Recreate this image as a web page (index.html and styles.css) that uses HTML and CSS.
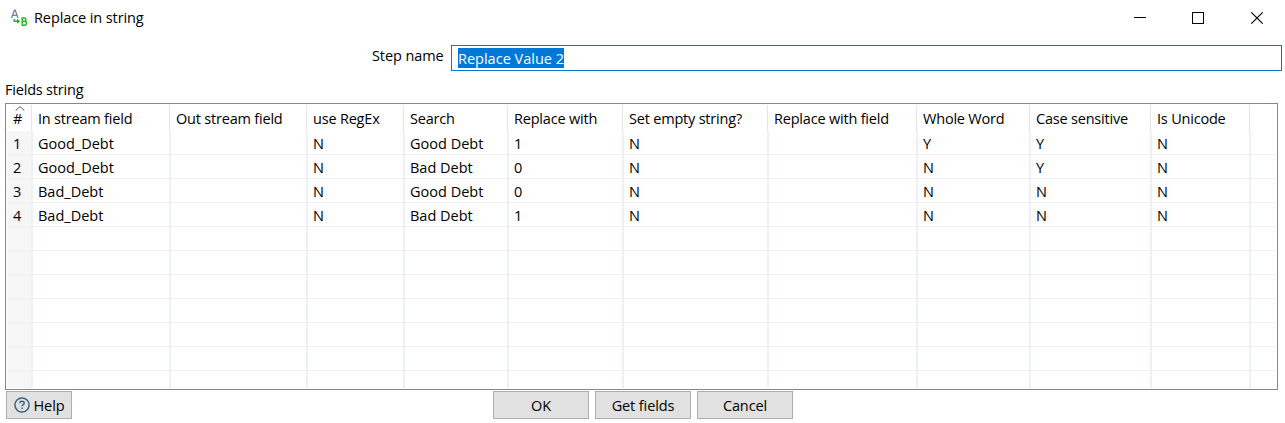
FILE: index.html
```html
<!DOCTYPE html>
<html lang="en">
<head>
<meta charset="utf-8">
<title>Replace in string</title>
<link rel="stylesheet" href="styles.css">
</head>
<body>
<div class="dialog">
  <header class="titlebar">
    <svg class="app-icon" width="18" height="18" viewBox="0 0 18 18" fill="none">
      <path d="M1.5 9 4.4 1.2h.8L8 9M2.6 6.3h4.4" stroke="#6b87a3" stroke-width="1.3"/>
      <path d="M4.2 10v2.2h4.6M7.2 10.4l1.8 1.8-1.8 1.8" stroke="#22b422" stroke-width="1.4"/>
      <path d="M12.2 9v7.2M11.6 9h2.6c2.4 0 2.4 3.3 0 3.3h-2M14.2 12.3c3 0 3 3.9 0 3.9h-2.6" stroke="#22b422" stroke-width="1.4"/>
    </svg>
    <h1 class="title">Replace in string</h1>
    <svg class="controls" width="132" height="14" viewBox="0 0 132 14" fill="none" stroke="#000" stroke-width="1">
      <path d="M0 6.5h12"/>
      <path d="M58.5 1.5h11v11h-11z" shape-rendering="crispEdges"/>
      <path d="M117.3 1.3l11.4 11.4M128.7 1.3l-11.4 11.4" stroke-width="1.2"/>
    </svg>
  </header>
  <div class="step-row">
    <label class="step-label">Step name</label>
    <div class="step-input"><span class="selection">Replace Value 2</span></div>
  </div>
  <div class="caption">Fields string</div>
  <div class="table">
    <div class="row head">
      <span class="sorted"><svg class="sort" width="10" height="5" viewBox="0 0 10 5" fill="none"><path d="M.6 4.6 5 .6l4.4 4" stroke="#555" stroke-width="1"/></svg>#</span><span>In stream field</span><span>Out stream field</span><span>use RegEx</span><span>Search</span><span>Replace with</span><span>Set empty string?</span><span>Replace with field</span><span>Whole Word</span><span>Case sensitive</span><span>Is Unicode</span><span></span>
    </div>
    <div class="row"><span>1</span><span>Good_Debt</span><span></span><span>N</span><span>Good Debt</span><span>1</span><span>N</span><span></span><span>Y</span><span>Y</span><span>N</span><span></span></div>
    <div class="row"><span>2</span><span>Good_Debt</span><span></span><span>N</span><span>Bad Debt</span><span>0</span><span>N</span><span></span><span>N</span><span>Y</span><span>N</span><span></span></div>
    <div class="row"><span>3</span><span>Bad_Debt</span><span></span><span>N</span><span>Good Debt</span><span>0</span><span>N</span><span></span><span>N</span><span>N</span><span>N</span><span></span></div>
    <div class="row"><span>4</span><span>Bad_Debt</span><span></span><span>N</span><span>Bad Debt</span><span>1</span><span>N</span><span></span><span>N</span><span>N</span><span>N</span><span></span></div>
    <div class="row"><span></span><span></span><span></span><span></span><span></span><span></span><span></span><span></span><span></span><span></span><span></span><span></span></div>
    <div class="row"><span></span><span></span><span></span><span></span><span></span><span></span><span></span><span></span><span></span><span></span><span></span><span></span></div>
    <div class="row"><span></span><span></span><span></span><span></span><span></span><span></span><span></span><span></span><span></span><span></span><span></span><span></span></div>
    <div class="row"><span></span><span></span><span></span><span></span><span></span><span></span><span></span><span></span><span></span><span></span><span></span><span></span></div>
    <div class="row"><span></span><span></span><span></span><span></span><span></span><span></span><span></span><span></span><span></span><span></span><span></span><span></span></div>
    <div class="row"><span></span><span></span><span></span><span></span><span></span><span></span><span></span><span></span><span></span><span></span><span></span><span></span></div>
    <div class="row last"><span></span><span></span><span></span><span></span><span></span><span></span><span></span><span></span><span></span><span></span><span></span><span></span></div>
  </div>
  <footer class="buttons">
    <button class="btn help"><svg width="16" height="16" viewBox="0 0 16 16" fill="none" stroke="#3d6384"><circle cx="8" cy="8" r="7.1" stroke-width="1.5"/><path d="M5.9 6.3c0-2.7 4.3-2.6 4.3-.1 0 1.5-2.1 1.5-2.1 3.1M8.1 10.4v1.5" stroke-width="1.5"/></svg><span class="btn-text">Help</span></button>
    <div class="actions">
      <button class="btn"><span class="btn-text">OK</span></button>
      <button class="btn"><span class="btn-text">Get fields</span></button>
      <button class="btn"><span class="btn-text">Cancel</span></button>
    </div>
  </footer>
</div>
</body>
</html>
```
FILE: styles.css
```css
* { box-sizing: border-box; }
body {
  margin: 0;
  background: #fff;
  color: #000;
  font: 14.5px/20px "Open Sans", "Noto Sans", sans-serif;
  letter-spacing: -0.1px;
}
.dialog { width: 1285px; height: 423px; overflow: hidden; }
.titlebar { display: flex; align-items: center; height: 35px; padding: 0 19px 0 10px; }
.title { margin: 0 auto 0 6px; font-size: 14.5px; font-weight: 400; }
.step-row { display: flex; height: 36px; padding: 10px 3px 0 372px; }
.step-label { width: 79px; line-height: 22px; }
.step-input { flex: 1; height: 26px; padding: 2px 6px; border: 1px solid #0078d7; }
.selection { display: inline-block; height: 20px; line-height: 22px; letter-spacing: 0; background: #0078d7; color: #fff; }
.caption { height: 32px; padding: 9px 0 0 5px; letter-spacing: -0.2px; }
.table {
  width: 1273px;
  height: 287px;
  margin-left: 5px;
  padding: 1px;
  border: 1px solid #828790;
}
.row {
  display: grid;
  grid-template-columns: 26px 138px 137px 97px 104px 115px 145px 149px 113px 121px 99px 25px;
  grid-template-rows: 100%;
  height: 24px;
}
.row span {
  padding-left: 5px;
  border-right: 2px solid #ebf0f9;
  border-bottom: 1px solid #f0f0f0;
  line-height: 25px;
  letter-spacing: 0;
  white-space: nowrap;
}
.row span:first-child { padding-left: 6px; background: #f6f6f6; }
.row span:last-child { border-right: 0; }
.head { height: 26px; }
.row.head span {
  margin-right: 1px;
  border-right: 1px solid #e5e5e5;
  border-bottom: 0;
  line-height: 27px;
  letter-spacing: -0.2px;
  background: #fff;
}
.row.head span:last-child { border-right: 0; }
.sorted { position: relative; }
.sort { position: absolute; top: 1px; left: 8px; }
.row.last { height: 17px; }
.row.last span { border-bottom: 0; }
.buttons { display: flex; padding: 1px 0 0 6px; }
.btn {
  display: flex;
  align-items: center;
  justify-content: center;
  width: 96px;
  height: 28px;
  padding: 0;
  border: 1px solid #adadad;
  background: #e1e1e1;
  color: #000;
  font: inherit;
  letter-spacing: -0.1px;
}
.btn-text { padding-top: 2px; }
.help { width: 66px; gap: 4px; }
.actions { display: flex; gap: 6px; margin-left: 421px; }
```
